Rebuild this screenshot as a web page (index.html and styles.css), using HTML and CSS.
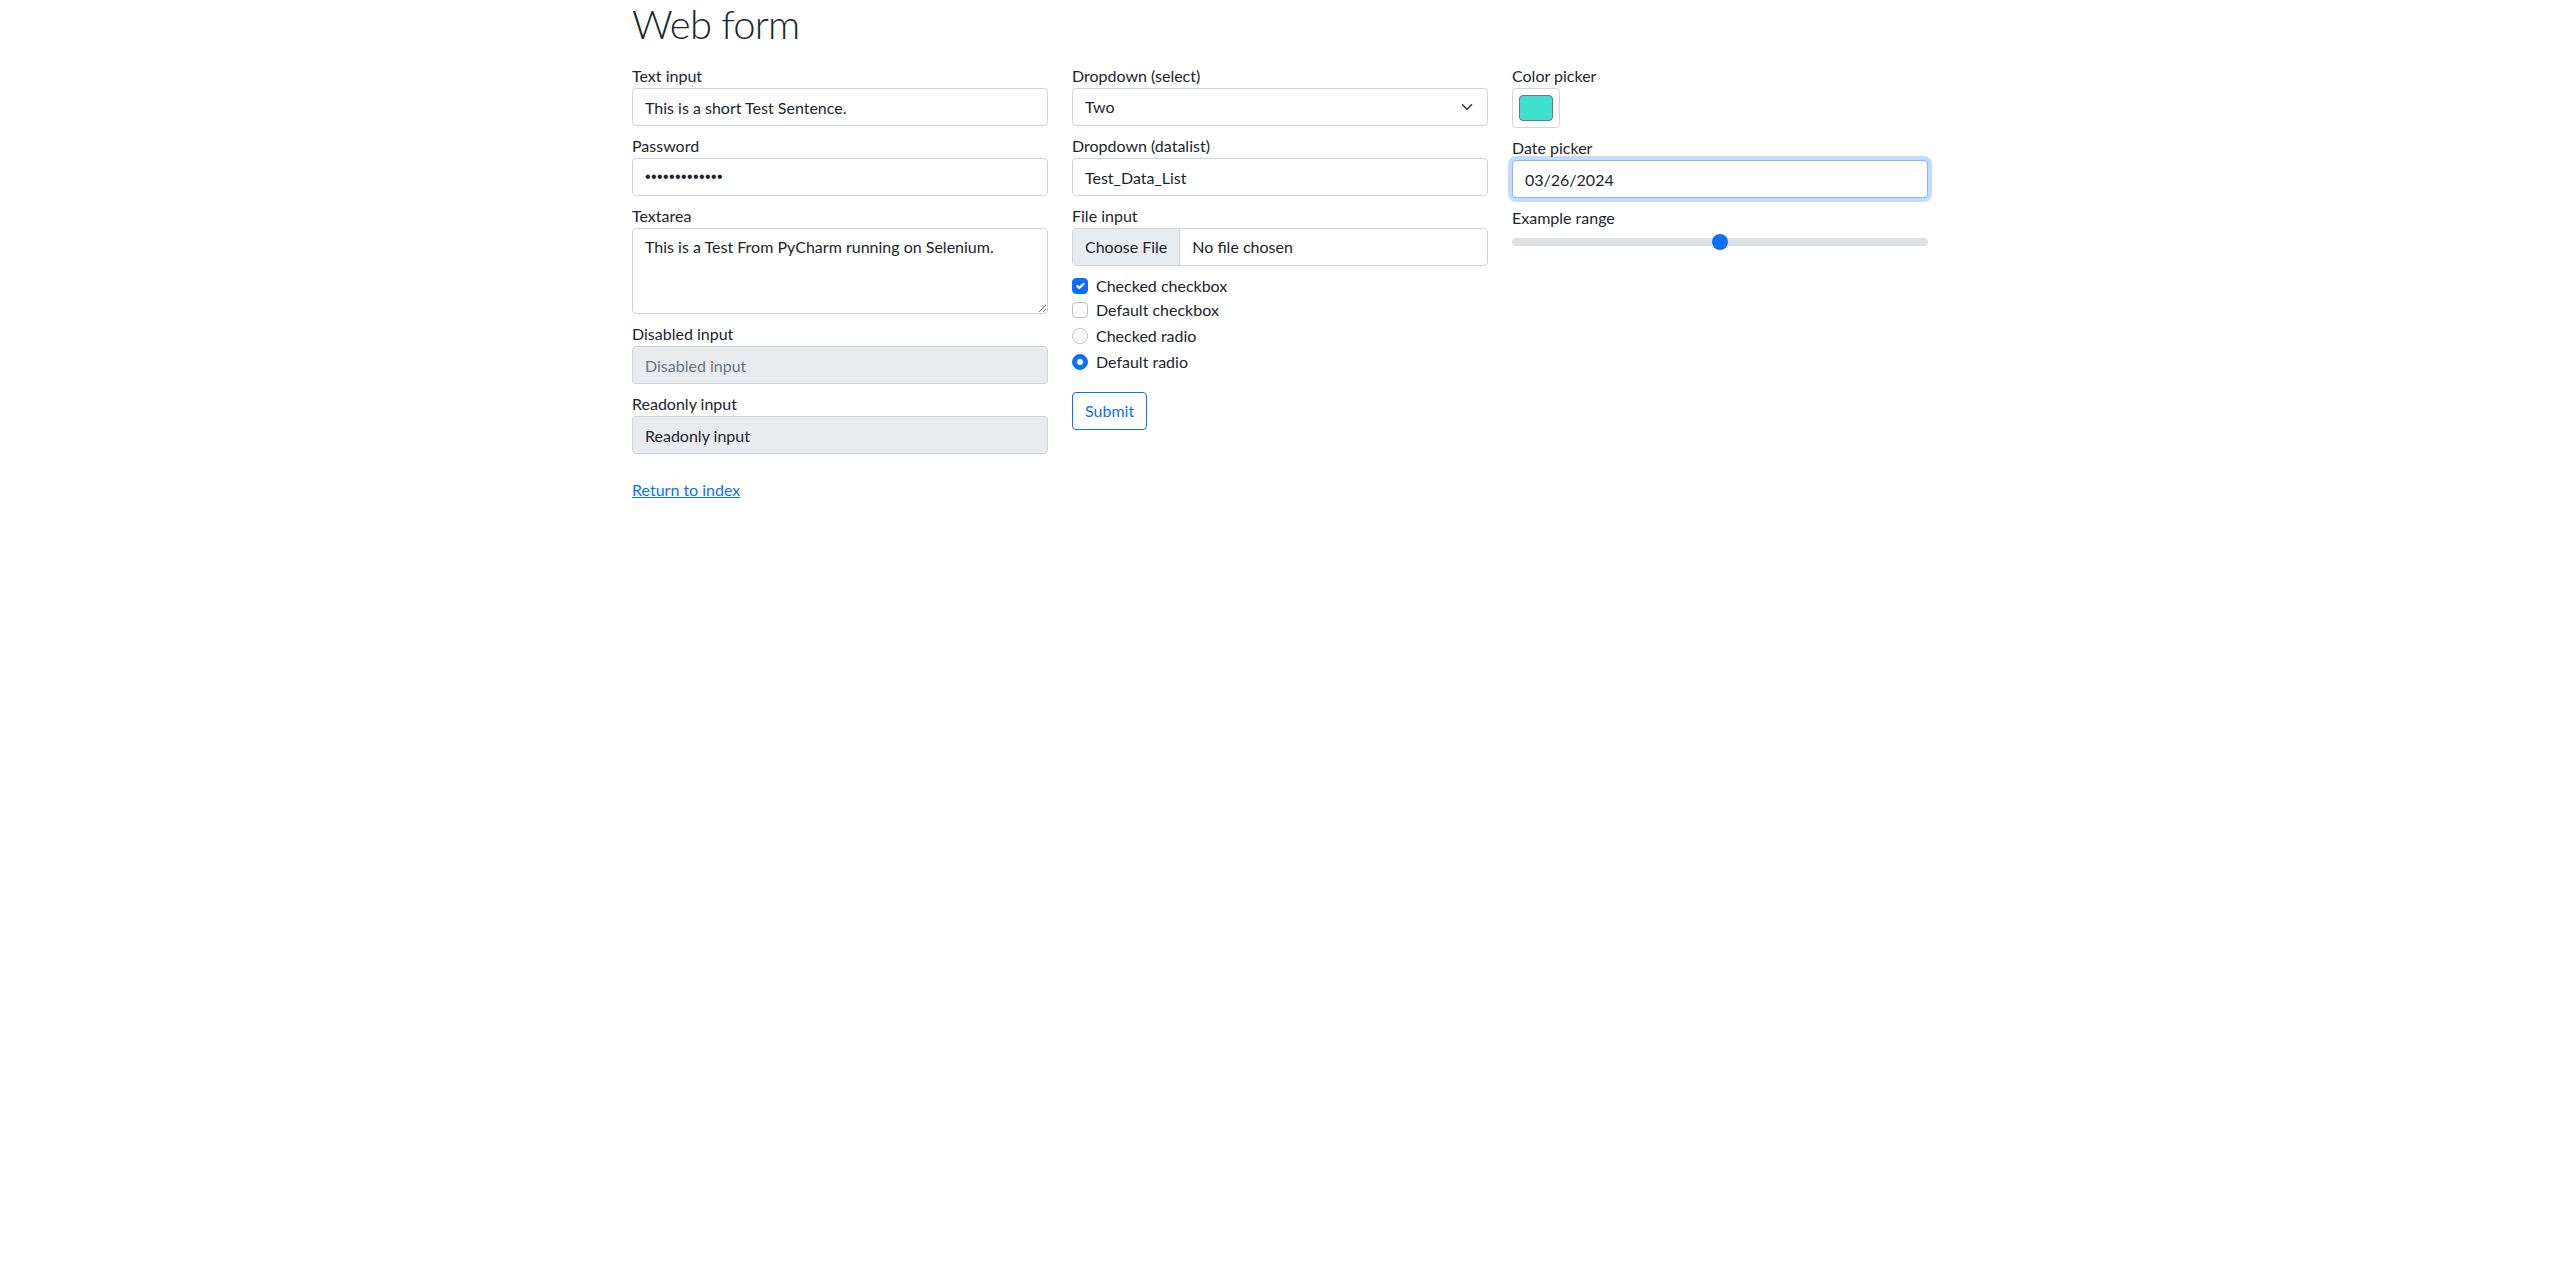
FILE: index.html
```html
<!DOCTYPE html>
<html lang="en">
<head>
<meta charset="utf-8">
<title>Web form</title>
<link rel="stylesheet" href="styles.css">
</head>
<body>
<div class="container">
  <h1 class="title">Web form</h1>
  <form class="row" onsubmit="return false">
    <div class="col">
      <label class="field">Text input
        <input type="text" class="control" value="This is a short Test Sentence.">
      </label>
      <label class="field">Password
        <input type="password" class="control pw" value="Test_Password" autocomplete="off">
      </label>
      <label class="field">Textarea
        <textarea class="control area" rows="3">This is a Test From PyCharm running on Selenium.</textarea>
      </label>
      <label class="field">Disabled input
        <input type="text" class="control" placeholder="Disabled input" disabled>
      </label>
      <label class="field">Readonly input
        <input type="text" class="control ro" value="Readonly input" readonly>
      </label>
    </div>
    <div class="col">
      <label class="field">Dropdown (select)
        <span class="control select"><span>Two</span>
          <svg class="chev" width="16" height="12" viewBox="0 0 16 16"><path d="m2 5 6 6 6-6" fill="none" stroke="#343a40" stroke-width="2" stroke-linecap="round" stroke-linejoin="round"/></svg>
        </span>
      </label>
      <label class="field">Dropdown (datalist)
        <input type="text" class="control" value="Test_Data_List">
      </label>
      <label class="field">File input
        <span class="control file"><span class="file-btn">Choose File</span><span class="file-name">No file chosen</span></span>
      </label>
      <div class="check">
        <span class="box checked">
          <svg width="16" height="16" viewBox="0 0 20 20"><path d="m6 10 3 3 6-6" fill="none" stroke="#fff" stroke-width="3" stroke-linecap="round" stroke-linejoin="round"/></svg>
        </span>
        <span>Checked checkbox</span>
      </div>
      <div class="check">
        <span class="box"></span>
        <span>Default checkbox</span>
      </div>
      <div class="check spaced">
        <span class="box radio"></span>
        <span>Checked radio</span>
      </div>
      <div class="check spaced">
        <span class="box radio on"><span class="dot"></span></span>
        <span>Default radio</span>
      </div>
      <button type="submit" class="btn">Submit</button>
    </div>
    <div class="col">
      <label class="field">Color picker
        <span class="color"><span class="swatch"></span></span>
      </label>
      <label class="field">Date picker
        <input type="text" class="control focused" value="03/26/2024">
      </label>
      <label class="field">Example range
        <span class="range"><span class="track"></span><span class="thumb"></span></span>
      </label>
    </div>
  </form>
  <div class="foot">
    <a href="#" class="link">Return to index</a>
  </div>
</div>
</body>
</html>
```

FILE: styles.css
```css
* { box-sizing: border-box; }
html, body { margin: 0; padding: 0; background: #fff; }
body {
  font-family: Lato, "Liberation Sans", sans-serif;
  font-size: 16px;
  line-height: 1.5;
  color: #212529;
}
.container {
  width: 1320px;
  margin: 0 auto;
}
.title {
  margin: 0 12px 8px;
  font-size: 40px;
  font-weight: 300;
  line-height: 1.2;
  letter-spacing: -0.8px;
}
.row {
  display: grid;
  grid-template-columns: repeat(3, 1fr);
  margin: 0;
}
.col {
  padding: 8px 12px;
  display: flex;
  flex-direction: column;
  align-items: flex-start;
}
.field {
  display: block;
  width: 100%;
  margin-bottom: 8px;
}
.control {
  display: block;
  width: 100%;
  height: 38px;
  padding: 6px 12px;
  font-family: inherit;
  font-size: 16px;
  line-height: 24px;
  color: #212529;
  background: #fff;
  border: 1px solid #ced4da;
  border-radius: 4px;
  outline: none;
  margin: 0;
}
.control.pw {
  font-family: "Liberation Sans", sans-serif;
  letter-spacing: 0.4px;
}
.control:disabled { background: #e9ecef; }
.control:disabled::placeholder { color: #6c757d; }
.control.ro { background: #e9ecef; }
.control.area { height: 86px; resize: vertical; }
.control.focused {
  border-color: #86b7fe;
  box-shadow: 0 0 0 4px rgba(13, 110, 253, .25);
}
.select {
  display: flex;
  align-items: center;
  justify-content: space-between;
  padding-right: 12px;
}
.file {
  display: flex;
  align-items: center;
  padding: 0;
  overflow: hidden;
}
.file-btn {
  height: 100%;
  padding: 6px 12px;
  background: #e9ecef;
  border-right: 1px solid #ced4da;
}
.file-name { padding-left: 12px; }
.check {
  display: flex;
  align-items: flex-start;
  gap: 8px;
  height: 24px;
}
.check.spaced { margin-top: 2px; }
.box {
  width: 16px;
  height: 16px;
  margin-top: 4px;
  border: 1px solid rgba(0, 0, 0, .25);
  border-radius: 4px;
  display: flex;
  align-items: center;
  justify-content: center;
  flex: none;
}
.box.checked {
  background: #0d6efd;
  border-color: #0d6efd;
}
.box.checked svg { display: block; }
.box.radio { border-radius: 50%; }
.box.radio.on {
  background: #0d6efd;
  border-color: #0d6efd;
}
.dot {
  width: 6px;
  height: 6px;
  border-radius: 50%;
  background: #fff;
}
.btn {
  margin-top: 18px;
  padding: 6px 12px;
  font-family: inherit;
  font-size: 16px;
  line-height: 24px;
  color: #0d6efd;
  background: transparent;
  border: 1px solid #0d6efd;
  border-radius: 4px;
}
.color {
  display: block;
  width: 48px;
  height: 40px;
  padding: 6px;
  border: 1px solid #ced4da;
  border-radius: 4px;
}
.swatch {
  display: block;
  width: 100%;
  height: 100%;
  background: #40e0d0;
  border: 1px solid #767676;
  border-radius: 4px;
}
.range {
  display: block;
  position: relative;
  width: 100%;
  height: 24px;
}
.track {
  position: absolute;
  left: 0;
  right: 0;
  top: 8px;
  height: 8px;
  background: #dee2e6;
  border-radius: 16px;
}
.thumb {
  position: absolute;
  left: calc(50% - 8px);
  top: 4px;
  width: 16px;
  height: 16px;
  border-radius: 50%;
  background: #0d6efd;
}
.foot { padding: 8px 12px; }
.link { color: #0d6efd; text-decoration: underline; }
```
